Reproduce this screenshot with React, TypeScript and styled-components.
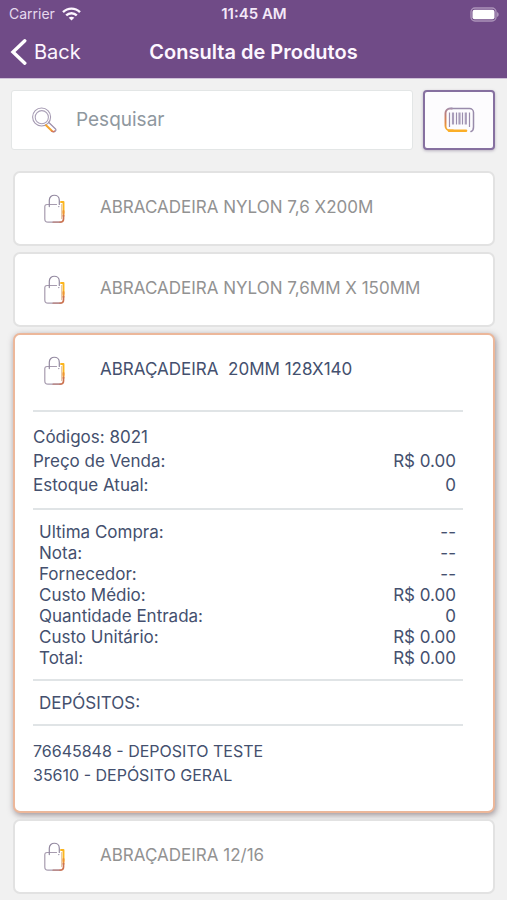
import React, { useState } from "react";
import styled, { createGlobalStyle } from "styled-components";

const GlobalStyle = createGlobalStyle`
  *, *::before, *::after { box-sizing: border-box; }
  html, body { margin: 0; background: #f1f1f1; }
  body { font-family: Inter, "Liberation Sans", sans-serif; overflow-x: hidden; }
  button, input { font: inherit; color: inherit; }
`;

const Screen = styled.div`
  height: 100vh;
  overflow-x: hidden;
  overflow-y: auto;
  scrollbar-width: none;
  background: #f1f1f1;
`;

const Header = styled.header`
  background: #704b87;
  color: #fdf6ff;
  border-bottom: 1px solid #cfc0d8;
`;

const StatusBar = styled.div`
  display: grid;
  grid-template-columns: 1fr auto 1fr;
  align-items: center;
  height: 26px;
  padding: 2px 8px 0 9px;
  font-size: 14px;
  line-height: 20px;
`;

const Carrier = styled.span`
  display: flex;
  align-items: center;
  gap: 7px;
  color: #e6d9ee;
`;

const Clock = styled.time`
  color: #f3e8f8;
  font-size: 15px;
  font-weight: 600;
`;

const BatterySlot = styled.span`
  display: flex;
  justify-content: flex-end;
`;

const NavBar = styled.nav`
  display: grid;
  grid-template-columns: 1fr auto 1fr;
  align-items: center;
  height: 52px;
  padding: 0 10px;
`;

const BackButton = styled.button`
  display: flex;
  align-items: center;
  justify-self: start;
  gap: 7px;
  padding: 0;
  border: 0;
  background: none;
  font-size: 20px;
  line-height: 28px;
  cursor: pointer;
`;

const Title = styled.h1`
  margin: 0;
  font-size: 20px;
  font-weight: 600;
  line-height: 28px;
`;

const SearchBar = styled.form`
  display: flex;
  gap: 10px;
  padding: 11px 12px 0 11px;
`;

const SearchField = styled.label`
  display: flex;
  flex: 1;
  align-items: center;
  gap: 19px;
  height: 60px;
  padding: 0 20px;
  border: 1px solid #e3e6e6;
  border-radius: 3px;
  background: #fff;
`;

const SearchInput = styled.input`
  flex: 1;
  min-width: 0;
  padding: 0;
  border: 0;
  outline: 0;
  background: none;
  color: #44506e;
  font-size: 19px;
  line-height: 28px;
  &::placeholder { color: #8f989f; opacity: 1; }
`;

const ScanButton = styled.button`
  display: grid;
  place-items: center;
  width: 72px;
  height: 60px;
  padding: 0;
  border: 2px solid #8670a0;
  border-radius: 4px;
  background: #fdfcfe;
  box-shadow: 0 1px 3px rgba(80, 60, 100, 0.35);
  cursor: pointer;
`;

const ProductList = styled.ul`
  display: flex;
  flex-direction: column;
  gap: 6px;
  margin: 0;
  padding: 21px 12px 6px 13px;
  list-style: none;
`;

const Card = styled.li<{ $open: boolean }>`
  border: ${(p) => (p.$open ? "2px solid #ecb79a" : "2px solid #e2e2e2")};
  border-radius: 7px;
  background: #fff;
  box-shadow: ${(p) => (p.$open ? "1px 2px 6px rgba(70, 50, 60, 0.5)" : "none")};
`;

const CardHeader = styled.button<{ $open: boolean }>`
  display: flex;
  align-items: center;
  gap: 34px;
  width: 100%;
  height: 71px;
  padding: 0 29px;
  border: 0;
  background: none;
  color: ${(p) => (p.$open ? "#44506e" : "#929292")};
  font-size: 17px;
  line-height: 24px;
  text-align: left;
  white-space: pre-wrap;
  cursor: pointer;
`;

const CardName = styled.span`
  padding-bottom: 4px;
`;

const Details = styled.div`
  padding: 4px 30px 13px 18px;
  color: #44506e;
  font-size: 17px;
`;

const Section = styled.section<{ $inset?: boolean }>`
  padding: ${(p) => (p.$inset ? "12px 7px 10px 6px" : "13px 7px 11px 0")};
  border-top: 2px solid #e0e4e6;
  line-height: ${(p) => (p.$inset ? "21px" : "24px")};
`;

const Fields = styled.dl`
  margin: 0;
`;

const Field = styled.div`
  display: flex;
  justify-content: space-between;
  dt, dd { margin: 0; }
`;

const SectionTitle = styled.h2`
  margin: 0;
  font: inherit;
`;

const Deposits = styled.ul`
  margin: 0;
  padding: 0;
  font-size: 16px;
  list-style: none;
`;

const WifiIcon = () => (
  <svg width="19" height="14" viewBox="0 0 19 14" fill="none" stroke="#fdf6ff" strokeWidth="2.4" aria-hidden="true">
    <path d="M1 5.1C5.8.4 13.2.4 18 5.1" />
    <path d="M4.2 8.4c3-2.9 7.6-2.9 10.6 0" />
    <path d="M9.5 13.6 6.7 10.8c1.6-1.5 4-1.5 5.600 0Z" fill="#fdf6ff" stroke="none" />
  </svg>
);

const BatteryIcon = () => (
  <svg width="29" height="15" viewBox="0 0 29 15" aria-hidden="true">
    <rect x="1" y="1" width="25" height="13" rx="4" fill="none" stroke="#ab93b9" strokeWidth="1.4" />
    <rect x="2.500" y="2.700" width="22" height="9.500" rx="2" fill="#fff" />
    <path d="M27 5c2.300.8 2.300 4.200 0 5Z" fill="#ab93b9" />
  </svg>
);

const BackIcon = () => (
  <svg width="17" height="26" viewBox="0 0 17 26" fill="none" stroke="#fff" strokeWidth="3.4" aria-hidden="true">
    <path d="M14.8 1.8 3 13l11.800 11.200" strokeLinejoin="miter" strokeLinecap="round" />
  </svg>
);

const SearchIcon = () => (
  <svg width="25" height="26" viewBox="0 0 25 26" fill="none" strokeLinecap="round" aria-hidden="true">
    <circle cx="9.600" cy="10" r="9" stroke="#a69bb3" strokeWidth="1.1" />
    <circle cx="9.800" cy="10.200" r="6.600" stroke="#aaa0b7" strokeWidth="1.1" />
    <path d="m16.800 15.500 6.500 6.200c1.600 1.700-.6 4-2.600 2.700" stroke="#9d8eac" strokeWidth="1.2" />
    <path d="m14 18.200 6 5.800" stroke="#f6a52d" strokeWidth="2" />
    <path d="m19.600 24 1.400.8 1.500-.8" stroke="#d8775a" strokeWidth="1.4" />
  </svg>
);

const BarcodeIcon = () => (
  <svg width="31" height="26" viewBox="0 0 31 26" fill="none" strokeLinecap="round" aria-hidden="true">
    <defs>
      <linearGradient id="scanFrame" gradientUnits="userSpaceOnUse" x1="4" y1="24" x2="8" y2="1">
        <stop offset="0" stopColor="#fbb52d" />
        <stop offset="0.35" stopColor="#e18645" />
        <stop offset="0.7" stopColor="#bd7d7b" />
        <stop offset="1" stopColor="#a391b0" />
      </linearGradient>
    </defs>
    <path d="M7 1.500h18.500a4 4 0 0 1 4 4V20c0 2.500-1 4-2.500 4.500" stroke="#998bab" strokeWidth="1.500" />
    <path d="M8 1.500H6a4.500 4.500 0 0 0-4.500 4.500v13A4.500 4.500 0 0 0 6 23.500h3" stroke="url(#scanFrame)" strokeWidth="1.900" />
    <path d="M5 23.700h17" stroke="#fbae28" strokeWidth="2.600" />
    <path d="M5.500 5.500v14.500M12.500 5.500v12M18.500 5.500v12M25.500 5.500v14.500" stroke="#9b8dad" strokeWidth="1.200" strokeLinecap="butt" />
    <path d="M9 5.500v12M15.500 5.500v12M21.800 5.500v12" stroke="#a99dba" strokeWidth="2.200" strokeLinecap="butt" />
  </svg>
);

const BagIcon = () => (
  <svg width="22" height="30" viewBox="0 0 22 30" fill="none" strokeLinecap="round" strokeLinejoin="round" aria-hidden="true">
    <path d="M12.500 10.500H3c-1.500 0-2.200.8-2.200 2.200V25c0 2.200 1 3.200 3.200 3.200h11" stroke="#a79caf" strokeWidth="1.200" />
    <path d="M5.300 12.600V6.200c0-6.600 10-6.600 10 0v4.300" stroke="#9389a0" strokeWidth="1.200" />
    <path d="M17 8h2.500v11" stroke="#fbb51e" strokeWidth="1.900" />
    <path d="M17.600 10.500v14.200" stroke="#e6c3a0" strokeWidth="1" />
    <path d="M19.500 17v5" stroke="#ee9333" strokeWidth="1.900" />
    <path d="M19.500 21.500v3.500c0 2-1.200 3.200-3.500 3.200" stroke="#cc7350" strokeWidth="1.700" />
    <path d="M9 28.200h7" stroke="#b9807c" strokeWidth="1.200" />
    <circle cx="14.800" cy="12.600" r=".7" fill="#9389a0" />
  </svg>
);

const products = [
  "ABRACADEIRA NYLON 7,6 X200M",
  "ABRACADEIRA NYLON 7,6MM X 150MM",
  "ABRAÇADEIRA  20MM 128X140",
  "ABRAÇADEIRA 12/16",
  "",
];

const summary = [
  ["Códigos: 8021", ""],
  ["Preço de Venda:", "R$ 0.00"],
  ["Estoque Atual:", "0"],
];

const purchase = [
  ["Ultima Compra:", "--"],
  ["Nota:", "--"],
  ["Fornecedor:", "--"],
  ["Custo Médio:", "R$ 0.00"],
  ["Quantidade Entrada:", "0"],
  ["Custo Unitário:", "R$ 0.00"],
  ["Total:", "R$ 0.00"],
];

const deposits = ["76645848 - DEPOSITO TESTE", "35610 - DEPÓSITO GERAL"];

const FieldList = ({ rows }: { rows: string[][] }) => (
  <Fields>
    {rows.map(([label, value]) => (
      <Field key={label}>
        <dt>{label}</dt>
        <dd>{value}</dd>
      </Field>
    ))}
  </Fields>
);

const ProductDetails = () => (
  <Details>
    <Section>
      <FieldList rows={summary} />
    </Section>
    <Section $inset>
      <FieldList rows={purchase} />
    </Section>
    <Section $inset>
      <SectionTitle>DEPÓSITOS:</SectionTitle>
    </Section>
    <Section>
      <Deposits>
        {deposits.map((d) => (
          <li key={d}>{d}</li>
        ))}
      </Deposits>
    </Section>
  </Details>
);

export default function App() {
  const [open, setOpen] = useState(2);
  return (
    <Screen>
      <GlobalStyle />
      <Header>
        <StatusBar>
          <Carrier>
            Carrier
            <WifiIcon />
          </Carrier>
          <Clock>11:45 AM</Clock>
          <BatterySlot>
            <BatteryIcon />
          </BatterySlot>
        </StatusBar>
        <NavBar>
          <BackButton type="button">
            <BackIcon />
            Back
          </BackButton>
          <Title>Consulta de Produtos</Title>
        </NavBar>
      </Header>
      <main>
        <SearchBar onSubmit={(e) => e.preventDefault()}>
          <SearchField>
            <SearchIcon />
            <SearchInput type="text" placeholder="Pesquisar" aria-label="Pesquisar" />
          </SearchField>
          <ScanButton type="button" aria-label="Ler código de barras">
            <BarcodeIcon />
          </ScanButton>
        </SearchBar>
        <ProductList>
          {products.map((name, i) => (
            <Card key={name} $open={open === i}>
              <CardHeader
                type="button"
                $open={open === i}
                aria-expanded={open === i}
                onClick={() => setOpen(open === i ? -1 : i)}
              >
                <BagIcon />
                <CardName>{name}</CardName>
              </CardHeader>
              {open === i && <ProductDetails />}
            </Card>
          ))}
        </ProductList>
      </main>
    </Screen>
  );
}
